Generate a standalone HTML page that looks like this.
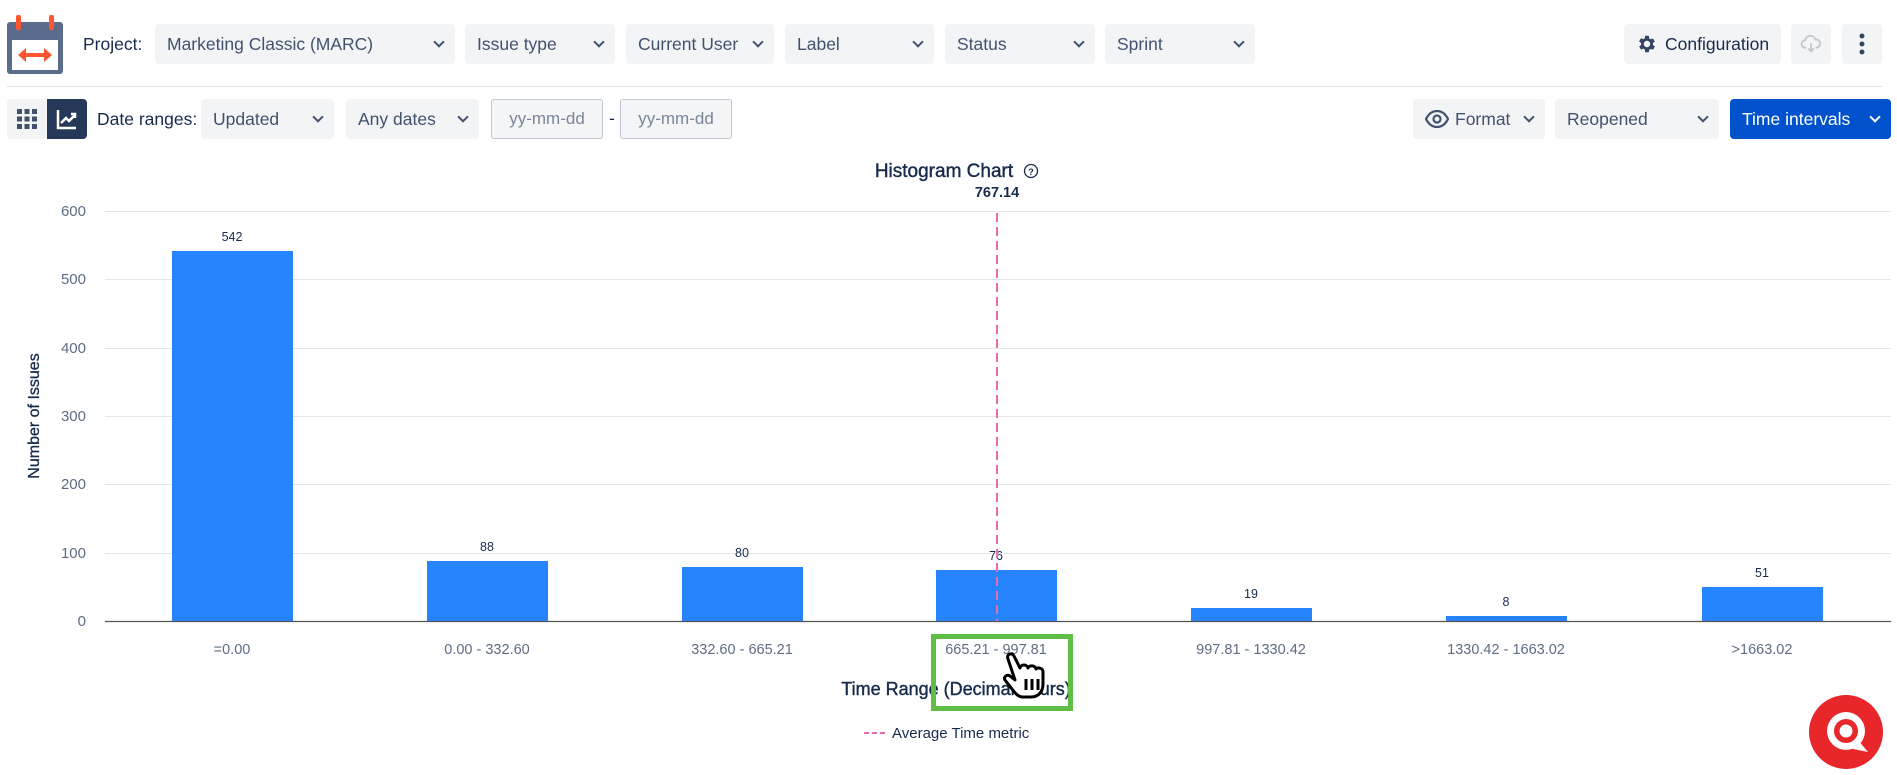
<!DOCTYPE html>
<html><head><meta charset="utf-8"><style>
*{box-sizing:border-box;margin:0;padding:0}
body{width:1897px;height:775px;background:#fff;font-family:"Liberation Sans",sans-serif;color:#172b4d;position:relative;overflow:hidden}
.a{position:absolute}
.dd{position:absolute;background:#f3f4f6;border-radius:4px;height:40px;font-size:17.5px;color:#42526e;display:flex;align-items:center;padding-left:12px}
.dd .c{position:absolute;right:12px;top:14px;width:8px;height:8px;border-right:2px solid #42526e;border-bottom:2px solid #42526e;transform:rotate(45deg)}
.inp{position:absolute;border:1px solid #c1c7d0;background:#f4f5f7;border-radius:3px;height:40px;font-size:17px;color:#7a869a;display:flex;align-items:center;justify-content:center}
.lbl{position:absolute;font-size:17.5px;color:#172b4d}
</style></head><body>
<svg class="a" style="left:6px;top:14px" width="58" height="62" viewBox="0 0 58 62">
<rect x="1" y="8" width="56" height="52" rx="3" fill="#5b6b8c"/>
<rect x="6" y="26" width="46" height="30" fill="#fff"/>
<rect x="10" y="1" width="5" height="15" rx="2" fill="#ff5630"/>
<rect x="43" y="1" width="5" height="15" rx="2" fill="#ff5630"/>
<path d="M12 41 L20 34 V39 H38 V34 L46 41 L38 48 V43 H20 V48 Z" fill="#ff5630"/>
</svg>
<div class="lbl" style="left:83px;top:34px">Project:</div>
<div class="dd" style="left:155px;top:24px;width:300px">Marketing Classic (MARC)<span class="c"></span></div>
<div class="dd" style="left:465px;top:24px;width:150px">Issue type<span class="c"></span></div>
<div class="dd" style="left:626px;top:24px;width:148px">Current User<span class="c"></span></div>
<div class="dd" style="left:785px;top:24px;width:149px">Label<span class="c"></span></div>
<div class="dd" style="left:945px;top:24px;width:150px">Status<span class="c"></span></div>
<div class="dd" style="left:1105px;top:24px;width:150px">Sprint<span class="c"></span></div>
<div class="dd" style="left:1624px;top:24px;width:157px;padding-left:12px;color:#172b4d">
<svg width="22" height="22" viewBox="0 0 24 24" style="margin-right:7px"><path fill="#344563" d="M19.4 13a7.5 7.5 0 000-2l2.1-1.6-2-3.5-2.5 1a7.6 7.6 0 00-1.7-1L15 3h-4l-.4 2.7a7.6 7.6 0 00-1.7 1l-2.5-1-2 3.5L6.6 11a7.5 7.5 0 000 2l-2.1 1.6 2 3.5 2.5-1a7.6 7.6 0 001.7 1L11 21h4l.4-2.7a7.6 7.6 0 001.7-1l2.5 1 2-3.5zM13 15.5a3.5 3.5 0 110-7 3.5 3.5 0 010 7z" transform="translate(-1 0)"/></svg>Configuration</div>
<div class="dd" style="left:1791px;top:24px;width:40px;padding:0;justify-content:center">
<svg width="22" height="22" viewBox="0 0 24 24"><path d="M7 16H6a4 4 0 01-.5-8A6 6 0 0117 7a4.5 4.5 0 011 9h-1" fill="none" stroke="#c1c7d0" stroke-width="2"/><path d="M12 11v9M9 17l3 3 3-3" fill="none" stroke="#c1c7d0" stroke-width="2"/></svg></div>
<div class="dd" style="left:1842px;top:24px;width:40px;padding:0;justify-content:center">
<svg width="6" height="22"><circle cx="3" cy="3" r="2.5" fill="#344563"/><circle cx="3" cy="11" r="2.5" fill="#344563"/><circle cx="3" cy="19" r="2.5" fill="#344563"/></svg></div>
<div class="a" style="left:7px;top:86px;width:1875px;height:1px;background:#dfe1e6"></div>
<div class="a" style="left:7px;top:99px;width:40px;height:40px;background:#f3f4f6;border-radius:4px 0 0 4px"></div>
<svg class="a" style="left:17px;top:109px" width="20" height="20"><g fill="#42526e"><rect x="0" y="0" width="5" height="5"/><rect x="7.5" y="0" width="5" height="5"/><rect x="15" y="0" width="5" height="5"/><rect x="0" y="7.5" width="5" height="5"/><rect x="7.5" y="7.5" width="5" height="5"/><rect x="15" y="7.5" width="5" height="5"/><rect x="0" y="15" width="5" height="5"/><rect x="7.5" y="15" width="5" height="5"/><rect x="15" y="15" width="5" height="5"/></g></svg>
<div class="a" style="left:47px;top:99px;width:40px;height:40px;background:#253858;border-radius:0 4px 4px 0"></div>
<svg class="a" style="left:56px;top:108px" width="22" height="22" viewBox="0 0 22 22"><path d="M2 2v18h18" fill="none" stroke="#fff" stroke-width="2.5"/><path d="M5 15l5-5 3 3 6-6M15 6h4v4" fill="none" stroke="#fff" stroke-width="2.5"/></svg>
<div class="lbl" style="left:97px;top:109px">Date ranges:</div>
<div class="dd" style="left:201px;top:99px;width:133px">Updated<span class="c"></span></div>
<div class="dd" style="left:346px;top:99px;width:133px">Any dates<span class="c"></span></div>
<div class="inp" style="left:491px;top:99px;width:112px">yy-mm-dd</div>
<div class="lbl" style="left:609px;top:108px">-</div>
<div class="inp" style="left:620px;top:99px;width:112px">yy-mm-dd</div>
<div class="dd" style="left:1413px;top:99px;width:132px;color:#42526e">
<svg width="24" height="18" viewBox="0 0 24 18" style="margin-right:6px"><path d="M1 9C4 3 8 1 12 1s8 2 11 8c-3 6-7 8-11 8S4 15 1 9z" fill="none" stroke="#42526e" stroke-width="2.2"/><circle cx="12" cy="9" r="3.5" fill="none" stroke="#42526e" stroke-width="2.2"/></svg>Format<span class="c"></span></div>
<div class="dd" style="left:1555px;top:99px;width:164px">Reopened<span class="c"></span></div>
<div class="dd" style="left:1730px;top:99px;width:161px;background:#0052cc;color:#fff">Time intervals<span class="c" style="border-color:#fff"></span></div>
<svg class="a" style="left:0;top:0" width="1897" height="775">
<text x="944" y="177" text-anchor="middle" font-size="19" fill="#172b4d" stroke="#172b4d" stroke-width="0.4" font-family="Liberation Sans">Histogram Chart</text>
<circle cx="1031" cy="171" r="6.5" fill="none" stroke="#172b4d" stroke-width="1.3"/>
<text x="1031" y="175" text-anchor="middle" font-size="9" fill="#172b4d" font-weight="bold">?</text>
<g stroke="#e6e6e6" stroke-width="1">
<line x1="105" x2="1891" y1="211.5" y2="211.5"/><line x1="105" x2="1891" y1="279.5" y2="279.5"/><line x1="105" x2="1891" y1="348.5" y2="348.5"/><line x1="105" x2="1891" y1="416.5" y2="416.5"/><line x1="105" x2="1891" y1="484.5" y2="484.5"/><line x1="105" x2="1891" y1="553.5" y2="553.5"/>
</g>
<g font-size="15" fill="#5e6c84" text-anchor="end">
<text x="86" y="216">600</text><text x="86" y="284">500</text><text x="86" y="353">400</text><text x="86" y="421">300</text><text x="86" y="489">200</text><text x="86" y="558">100</text><text x="86" y="626">0</text>
</g>
<text transform="translate(39 416) rotate(-90)" text-anchor="middle" font-size="16" fill="#172b4d" stroke="#172b4d" stroke-width="0.3">Number of Issues</text>
<g fill="#2684ff">
<rect x="172" y="251" width="121" height="370"/>
<rect x="427" y="561" width="121" height="60"/>
<rect x="682" y="567" width="121" height="54"/>
<rect x="936" y="570" width="121" height="51"/>
<rect x="1191" y="608" width="121" height="13"/>
<rect x="1446" y="616" width="121" height="5"/>
<rect x="1702" y="587" width="121" height="34"/>
</g>
<line x1="105" x2="1891" y1="621.5" y2="621.5" stroke="#555" stroke-width="1.3"/>
<g font-size="12.5" fill="#172b4d" text-anchor="middle">
<text x="232" y="241">542</text><text x="487" y="551">88</text><text x="742" y="557">80</text><text x="996" y="560">76</text><text x="1251" y="598">19</text><text x="1506" y="606">8</text><text x="1762" y="577">51</text>
</g>
<line x1="997" x2="997" y1="213" y2="621" stroke="#e86bab" stroke-width="2" stroke-dasharray="9,5"/>
<text x="997" y="197" text-anchor="middle" font-size="14.5" font-weight="bold" fill="#172b4d">767.14</text>
<g font-size="14.5" fill="#5e6c84" text-anchor="middle">
<text x="232" y="654">=0.00</text><text x="487" y="654">0.00 - 332.60</text><text x="742" y="654">332.60 - 665.21</text><text x="996" y="654">665.21 - 997.81</text><text x="1251" y="654">997.81 - 1330.42</text><text x="1506" y="654">1330.42 - 1663.02</text><text x="1762" y="654">&gt;1663.02</text>
</g>
<text x="956" y="695" text-anchor="middle" font-size="18" fill="#172b4d" stroke="#172b4d" stroke-width="0.4">Time Range (Decimal hours)</text>
<line x1="864" x2="886" y1="733" y2="733" stroke="#e86bab" stroke-width="2" stroke-dasharray="5,3"/>
<text x="892" y="738" font-size="15" fill="#172b4d">Average Time metric</text>
<rect x="933.5" y="636.5" width="137" height="72" fill="none" stroke="#5fbf45" stroke-width="5"/>
<g transform="translate(1003 652)" stroke="#000" stroke-width="3" fill="#fff" stroke-linejoin="round">
<path d="M5 7c-2-5 4-7 6-3l6 12c1-4 7-4 8 0 1-3 7-3 8 1 2-2 7-1 7 3v12c0 7-4 13-12 13h-8c-5 0-8-4-11-8L2 28c-2-3 2-6 5-4l5 4z"/>
<path d="M23 27v11M29 27v11M35 27v11" fill="none"/>
</g>
<circle cx="1846" cy="732" r="37" fill="#e8272a"/>
<circle cx="1846" cy="731" r="19" fill="#fff"/>
<path d="M1858 740 L1868 752 L1853 749 Z" fill="#fff"/>
<circle cx="1846" cy="731" r="12" fill="#e8272a"/>
<circle cx="1846" cy="731" r="6.5" fill="#fff"/>
</svg>
</body></html>
